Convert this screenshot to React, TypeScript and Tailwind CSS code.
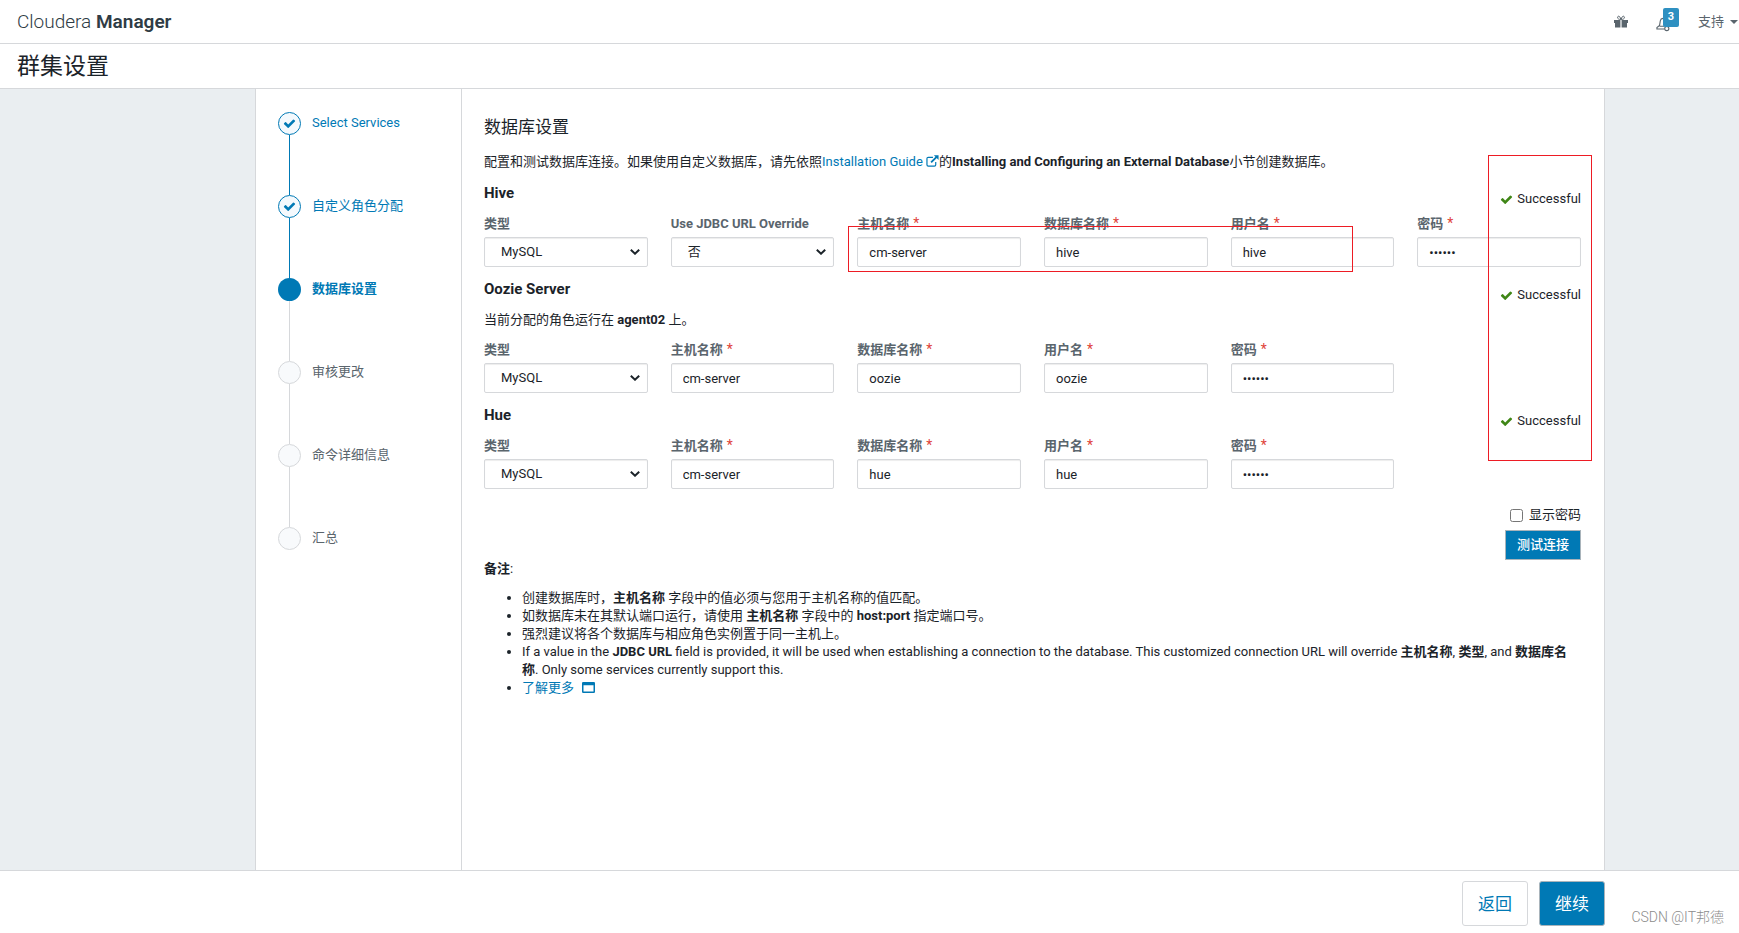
import React from 'react';

type FieldProps = {
  id: string;
  label: string;
  value: string;
  kind?: 'text' | 'password' | 'select';
  required?: boolean;
};

const steps = [
  { label: 'Select Services', state: 'done' },
  { label: '自定义角色分配', state: 'done' },
  { label: '数据库设置', state: 'current' },
  { label: '审核更改', state: 'todo' },
  { label: '命令详细信息', state: 'todo' },
  { label: '汇总', state: 'todo' },
];

const CheckIcon = ({ className }: { className: string }) => (
  <svg viewBox="0 0 1792 1792" className={className} fill="currentColor">
    <path d="M1671 566q0 40-28 68l-724 724-136 136q-28 28-68 28t-68-28l-136-136-362-362q-28-28-28-68t28-68l136-136q28-28 68-28t68 28l294 295 656-657q28-28 68-28t68 28l136 136q28 28 28 68z" />
  </svg>
);

const Field = ({ id, label, value, kind = 'text', required = true }: FieldProps) => (
  <div>
    <label htmlFor={id} className="flex h-[22px] gap-1 whitespace-nowrap font-bold leading-[18px] text-[#5a656d]">
      {label}
      {required && <span className="text-[14px] font-normal leading-4 text-[#e0433a]">*</span>}
    </label>
    {kind === 'select' ? (
      <div className="relative">
        <select id={id} className="block h-[30px] w-full appearance-none rounded-[2px] border border-[#d6d8db] bg-white pl-4 shadow-[inset_0_1px_1px_rgba(0,0,0,0.075)]">
          <option>{value}</option>
        </select>
        <svg viewBox="0 0 10 6" className="pointer-events-none absolute right-2 top-3 h-[6px] w-[10px]" fill="none" stroke="#1b2329" strokeWidth="2">
          <path d="M0.8 0.8 L5 4.7 L9.2 0.8" />
        </svg>
      </div>
    ) : (
      <input
        id={id}
        type={kind}
        defaultValue={value}
        className="block h-[30px] w-full rounded-[2px] border border-[#d6d8db] bg-white px-[11px] shadow-[inset_0_1px_1px_rgba(0,0,0,0.075)]"
      />
    )}
  </div>
);

const Database = ({ title, note, children }: { title: string; note?: React.ReactNode; children: React.ReactNode }) => (
  <section className="mb-3">
    <div className="flex h-8 justify-between">
      <h4 className="text-[15px] font-bold leading-5">{title}</h4>
      <p className="flex items-center gap-1 self-start pt-[7px] leading-[18px]">
        <CheckIcon className="h-[13px] w-[13px] text-[#3f8616]" />
        Successful
      </p>
    </div>
    {note && <p className="mb-2 h-[22px]">{note}</p>}
    <div className="grid grid-cols-6 gap-x-[23px]">{children}</div>
  </section>
);

const Stepper = () => (
  <ol className="w-[206px] shrink-0 border-r border-[#d6d8db] pl-[22px] pt-[23px]">
    {steps.map((step, i) => (
      <li key={step.label} className="flex gap-[11px]">
        <div className="flex flex-col items-center">
          {step.state === 'done' && (
            <span className="flex h-[23px] w-[23px] items-center justify-center rounded-full border border-[#0079b5] bg-[#f4f9fd]">
              <CheckIcon className="h-[13px] w-[13px] text-[#0079b5]" />
            </span>
          )}
          {step.state === 'current' && <span className="h-[23px] w-[23px] rounded-full bg-[#0079b5]" />}
          {step.state === 'todo' && <span className="h-[23px] w-[23px] rounded-full border border-[#d6d8db] bg-[#f8fafc]" />}
          {i < steps.length - 1 && (
            <span className={step.state === 'done' ? 'h-[60px] w-px bg-[#0079b5]' : 'h-[60px] w-px bg-[#d6d8db]'} />
          )}
        </div>
        {step.state === 'todo' ? (
          <span className="leading-[21px] text-[#5a656d]">{step.label}</span>
        ) : (
          <a href="#" className={step.state === 'current' ? 'font-bold leading-[21px] text-[#0079b5]' : 'leading-[21px] text-[#0079b5]'}>
            {step.label}
          </a>
        )}
      </li>
    ))}
  </ol>
);

const App = () => {
  return (
    <div className="flex min-h-screen flex-col bg-white font-['Roboto','Noto_Sans_CJK_SC',sans-serif] text-[13px] leading-[18px] text-[#1b2329]">
      <header className="flex h-11 items-center justify-between border-b border-[#d6d8db] pl-[17px] pr-px">
        <a href="#" className="text-[19px] font-light leading-6 text-[#2f3c45]">
          Cloudera <span className="font-semibold">Manager</span>
        </a>
        <nav className="flex items-center text-[#5a656d]">
          <button aria-label="gift" className="mr-7">
            <svg viewBox="0 0 14 13" className="h-[13px] w-[14px]" fill="currentColor">
              <path d="M1 5 H6.4 V12.5 H1 Z M7.6 5 H13 V12.5 H7.6 Z M0 5 H6.4 V8 H0 Z M7.6 5 H14 V8 H7.6 Z" />
              <path d="M6.8 4.5 C5.5 4.5 3.3 4 3.6 2.2 C4 0.5 6.2 0.8 6.8 4.5 M7.2 4.5 C8.5 4.5 10.7 4 10.4 2.2 C10 0.5 7.8 0.8 7.2 4.5" fill="none" stroke="currentColor" />
            </svg>
          </button>
          <button aria-label="notifications" className="relative mr-6 h-5 w-[18px]">
            <svg viewBox="0 0 16 16" className="mt-[5px] h-[15px] w-[15px]" fill="none" stroke="#5a656d" strokeWidth="1.2">
              <path d="M11 1.5 H7.5 Q5 1.8 4.6 4 L3.8 9 L1 11.3 V12.8 H9 M3.8 9.8 H9" />
              <circle cx="11.5" cy="12.3" r="2.2" />
            </svg>
            <span className="absolute -top-1 left-[7px] flex h-[19px] w-4 items-center justify-center rounded-[2px] bg-[#2e90c1] text-[11px] font-bold text-white">3</span>
          </button>
          <button className="flex items-center gap-[6px]">
            支持
            <span className="border-x-4 border-t-4 border-x-transparent border-t-[#5a656d]" />
          </button>
        </nav>
      </header>
      <div className="flex h-[45px] items-center border-b border-[#d6d8db] pl-[17px] pt-0.5">
        <h1 className="text-[23px] leading-8">群集设置</h1>
      </div>

      <div className="flex flex-1 bg-[#eaeef1] pl-[255px] pr-[134px]">
        <div className="flex min-w-0 flex-1 border-x border-[#d6d8db] bg-white">
          <Stepper />
          <main className="relative min-w-0 flex-1 pl-[22px] pr-[23px] pt-[26px]">
            <h2 className="mb-[13px] text-[17px] leading-6">数据库设置</h2>
            <p className="mb-[11px] h-5 leading-5">
              配置和测试数据库连接。如果使用自定义数据库，请先依照
              <a href="#" className="text-[#0079b5]">
                Installation Guide{' '}
                <svg viewBox="0 0 14 13" className="inline h-3 w-[13px] align-[-1px]" fill="none" stroke="currentColor" strokeWidth="1.3">
                  <path d="M7.5 2.5 H2.5 Q1 2.5 1 4 V10.5 Q1 12 2.5 12 H9 Q10.5 12 10.5 10.5 V7.5" />
                  <path d="M5.5 8 L11.5 2" strokeWidth="2" />
                  <path d="M8.5 0.2 H13.6 V5.3 Z" fill="currentColor" stroke="none" />
                </svg>
              </a>
              的<b>Installing and Configuring an External Database</b>小节创建数据库。
            </p>

            <Database title="Hive">
              <Field id="hive-type" label="类型" value="MySQL" kind="select" required={false} />
              <Field id="hive-jdbc" label="Use JDBC URL Override" value="否" kind="select" required={false} />
              <Field id="hive-host" label="主机名称" value="cm-server" />
              <Field id="hive-db" label="数据库名称" value="hive" />
              <Field id="hive-user" label="用户名" value="hive" />
              <Field id="hive-password" label="密码" value="secret" kind="password" />
            </Database>
            <Database title="Oozie Server" note={<>当前分配的角色运行在 <b>agent02</b> 上。</>}>
              <Field id="oozie-type" label="类型" value="MySQL" kind="select" required={false} />
              <Field id="oozie-host" label="主机名称" value="cm-server" />
              <Field id="oozie-db" label="数据库名称" value="oozie" />
              <Field id="oozie-user" label="用户名" value="oozie" />
              <Field id="oozie-password" label="密码" value="secret" kind="password" />
            </Database>
            <Database title="Hue">
              <Field id="hue-type" label="类型" value="MySQL" kind="select" required={false} />
              <Field id="hue-host" label="主机名称" value="cm-server" />
              <Field id="hue-db" label="数据库名称" value="hue" />
              <Field id="hue-user" label="用户名" value="hue" />
              <Field id="hue-password" label="密码" value="secret" kind="password" />
            </Database>

            <div className="mt-[15px] flex flex-col items-end">
              <label className="mb-1 flex h-[22px] items-center gap-[6px]">
                <input type="checkbox" className="h-[13px] w-[13px]" />
                显示密码
              </label>
              <button className="h-[30px] border border-[#a9b4bb] bg-[#0079b5] px-[11px] font-medium text-white">测试连接</button>
            </div>

            <p className="mb-[11px] leading-[18px]">
              <b>备注</b>:
            </p>
            <ul className="list-disc pl-[38px]">
              <li>创建数据库时，<b>主机名称</b> 字段中的值必须与您用于主机名称的值匹配。</li>
              <li>如数据库未在其默认端口运行，请使用 <b>主机名称</b> 字段中的 <b>host:port</b> 指定端口号。</li>
              <li>强烈建议将各个数据库与相应角色实例置于同一主机上。</li>
              <li>
                If a value in the <b>JDBC URL</b> field is provided, it will be used when establishing a connection to the database. This customized
                connection URL will override <b>主机名称</b>, <b>类型</b>, and <b>数据库名称</b>. Only some services currently support this.
              </li>
              <li>
                <a href="#" className="text-[#0079b5]">
                  了解更多
                  <svg viewBox="0 0 13 11" className="ml-2 inline h-[11px] w-[13px] align-[-1px]" fill="none" stroke="currentColor" strokeWidth="1.5">
                    <rect x="0.75" y="0.75" width="11.5" height="9.5" rx="0.5" />
                    <path d="M0.5 2 H12.5" strokeWidth="2.5" />
                  </svg>
                </a>
              </li>
            </ul>

            {/* highlight frames */}
            <div className="pointer-events-none absolute left-[386px] top-[137px] h-[46px] w-[505px] border border-[#ed1c24]" />
            <div className="pointer-events-none absolute right-3 top-[66px] h-[306px] w-[104px] border border-[#ed1c24]" />
          </main>
        </div>
      </div>

      <footer className="relative flex h-[63px] justify-end gap-[11px] border-t border-[#d6d8db] pr-[134px] pt-[10px] text-[17px]">
        <button className="h-[45px] w-[66px] rounded-[3px] border border-[#d6d8db] text-[#0079b5]">返回</button>
        <button className="h-[45px] w-[66px] rounded-[3px] border border-[#a9b4bb] bg-[#0079b5] text-white">继续</button>
        <span className="absolute bottom-1 right-[15px] text-[14px] font-light leading-6 text-[#8c8c8c]">CSDN @IT邦德</span>
      </footer>
    </div>
  );
};

export default App;
